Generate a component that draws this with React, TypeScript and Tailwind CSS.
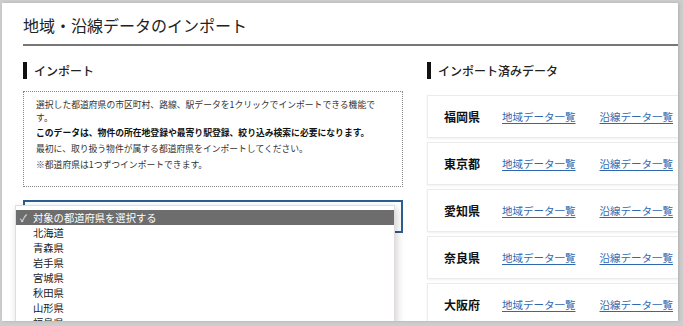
import React from 'react';

const prefectures = ['北海道', '青森県', '岩手県', '宮城県', '秋田県', '山形県', '福島県', '茨城県', '栃木県'];
const imported = ['福岡県', '東京都', '愛知県', '奈良県', '大阪府'];

const jp = { fontFamily: '"Noto Sans CJK JP", "Noto Sans", sans-serif' };

function Heading({ children }: { children: React.ReactNode }) {
  return (
    <div className="flex items-center h-[17px]">
      <span className="w-[4px] h-[17px] bg-[#111]" />
      <span className="ml-[7px] text-[12px] leading-[17px] font-medium text-[#222]">{children}</span>
    </div>
  );
}

export default function App() {
  return (
    <div className="w-[683px] h-[326px] bg-[#cdcdcd] pl-[2px] pt-[3px] overflow-hidden" style={jp}>
      <div className="relative w-[676px] h-[318px] bg-white overflow-hidden pl-[21px] pt-[10px] shadow-[1px_0_3px_rgba(0,0,0,0.15)]">
        <h1 className="text-[16px] leading-[24px] text-[#222] whitespace-nowrap">地域・沿線データのインポート</h1>
        <div className="mt-[7px] w-[700px] h-[2px] bg-[#777]" />

        <div className="flex gap-[24px] mt-[16px]">
          {/* left: import */}
          <section className="w-[380px] shrink-0">
            <Heading>インポート</Heading>
            <div className="mt-[12px] h-[96px] border border-dotted border-[#888] pl-[12px] pt-[6px] text-[8.8px] text-[#333] whitespace-nowrap">
              <p className="leading-[13px]">
                選択した都道府県の市区町村、路線、駅データを1クリックでインポートできる機能で
                <br />
                す。
              </p>
              <p className="leading-[16px] mt-[1px] font-bold text-[#111]">
                このデータは、物件の所在地登録や最寄り駅登録、絞り込み検索に必要になります。
              </p>
              <p className="leading-[16px]">最初に、取り扱う物件が属する都道府県をインポートしてください。</p>
              <p className="leading-[16px]">※都道府県は1つずつインポートできます。</p>
            </div>

            <div className="relative mt-[13px] h-[33px] border-2 border-[#2c5f90] bg-white">
              <div className="absolute left-[-10px] top-[3px] w-[380px] bg-white border border-[#e2dcdc] pt-[4px] shadow-[2px_3px_8px_rgba(0,0,0,0.18)] z-10">
                <div className="flex items-center h-[15px] bg-[#6d6d6d] text-white text-[10.3px] pl-[4px]">
                  <span className="w-[13px] text-[10px]">✓</span>
                  <span>対象の都道府県を選択する</span>
                </div>
                {prefectures.map((p) => (
                  <div key={p} className="flex items-center h-[15px] pl-[17px] text-[10.3px] text-[#222]">
                    {p}
                  </div>
                ))}
              </div>
            </div>
          </section>

          {/* right: imported list */}
          <section className="w-[300px] shrink-0">
            <Heading>インポート済みデータ</Heading>
            <div className="mt-[16px] flex flex-col gap-[4px]">
              {imported.map((name) => (
                <div
                  key={name}
                  className="h-[43px] flex items-center pl-[16px] border border-[#ebebeb] bg-white shadow-[0_1px_2px_rgba(0,0,0,0.06)] whitespace-nowrap"
                >
                  <span className="w-[58px] text-[12px] font-bold text-[#111]">{name}</span>
                  <a className="text-[10.5px] text-[#2f67b0] underline underline-offset-2">地域データ一覧</a>
                  <a className="ml-[24px] text-[10.5px] text-[#2f67b0] underline underline-offset-2">沿線データ一覧</a>
                </div>
              ))}
            </div>
          </section>
        </div>
      </div>
    </div>
  );
}
